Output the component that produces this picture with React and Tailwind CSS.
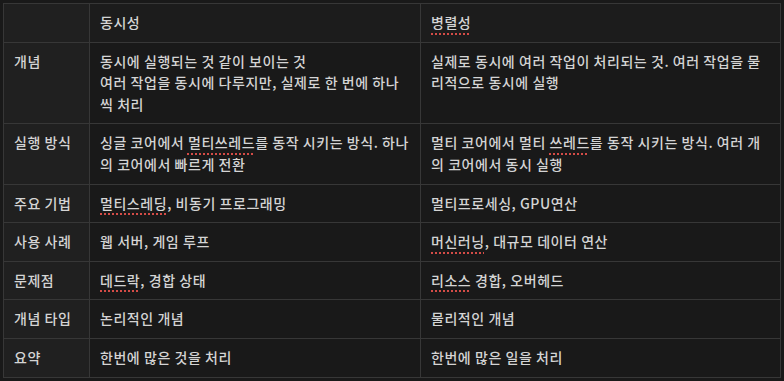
const rows = [
  {
    label: "개념",
    a: (
      <>
        동시에 실행되는 것 같이 보이는 것
        <br />
        여러 작업을 동시에 다루지만, 실제로 한 번에 하나씩 처리
      </>
    ),
    b: "실제로 동시에 여러 작업이 처리되는 것. 여러 작업을 물리적으로 동시에 실행",
  },
  {
    label: "실행 방식",
    a: (
      <>
        싱글 코어에서 <Typo>멀티쓰레드</Typo>를 동작 시키는 방식. 하나의 코어에서 빠르게 전환
      </>
    ),
    b: (
      <>
        멀티 코어에서 멀티 <Typo>쓰레드</Typo>를 동작 시키는 방식. 여러 개의 코어에서 동시 실행
      </>
    ),
  },
  {
    label: "주요 기법",
    a: (
      <>
        <Typo>멀티스레딩</Typo>, 비동기 프로그래밍
      </>
    ),
    b: "멀티프로세싱, GPU연산",
  },
  {
    label: "사용 사례",
    a: "웹 서버, 게임 루프",
    b: (
      <>
        <Typo>머신러닝</Typo>, 대규모 데이터 연산
      </>
    ),
  },
  {
    label: "문제점",
    a: (
      <>
        <Typo>데드락</Typo>, 경합 상태
      </>
    ),
    b: (
      <>
        <Typo>리소스</Typo> 경합, 오버헤드
      </>
    ),
  },
  { label: "개념 타입", a: "논리적인 개념", b: "물리적인 개념" },
  { label: "요약", a: "한번에 많은 것을 처리", b: "한번에 많은 일을 처리" },
];

function Typo({ children }) {
  return (
    <span className="underline decoration-dotted decoration-[#d44c47] decoration-2 underline-offset-[5px]">
      {children}
    </span>
  );
}

const cell = "border border-[#373737] px-[10px] py-[8px] align-top";

export default function App() {
  return (
    <div
      className="w-[784px] h-[381px] bg-[#191919] pl-[3px] pt-[3px] text-[14px] leading-[21.6px] tracking-[0.55px] font-medium text-[#d4d4d4] overflow-hidden"
      style={{ fontFamily: '"Noto Sans CJK KR", "Inter", sans-serif' }}
    >
      <table className="border-collapse table-fixed w-[778px]">
        <colgroup>
          <col className="w-[86px]" />
          <col className="w-[331px]" />
          <col />
        </colgroup>
        <thead>
          <tr>
            <th className={`${cell} bg-[#202020] font-medium text-left`}></th>
            <th className={`${cell} bg-[#1c1c1c] font-medium text-left`}>동시성</th>
            <th className={`${cell} bg-[#1c1c1c] font-medium text-left`}>
              <Typo>병렬성</Typo>
            </th>
          </tr>
        </thead>
        <tbody>
          {rows.map((r, i) => (
            <tr key={r.label}>
              <td className={`${cell} bg-[#202020] ${i === 0 ? "pb-[9px]" : ""}`}>{r.label}</td>
              <td className={cell}>{r.a}</td>
              <td className={cell}>{r.b}</td>
            </tr>
          ))}
        </tbody>
      </table>
    </div>
  );
}
